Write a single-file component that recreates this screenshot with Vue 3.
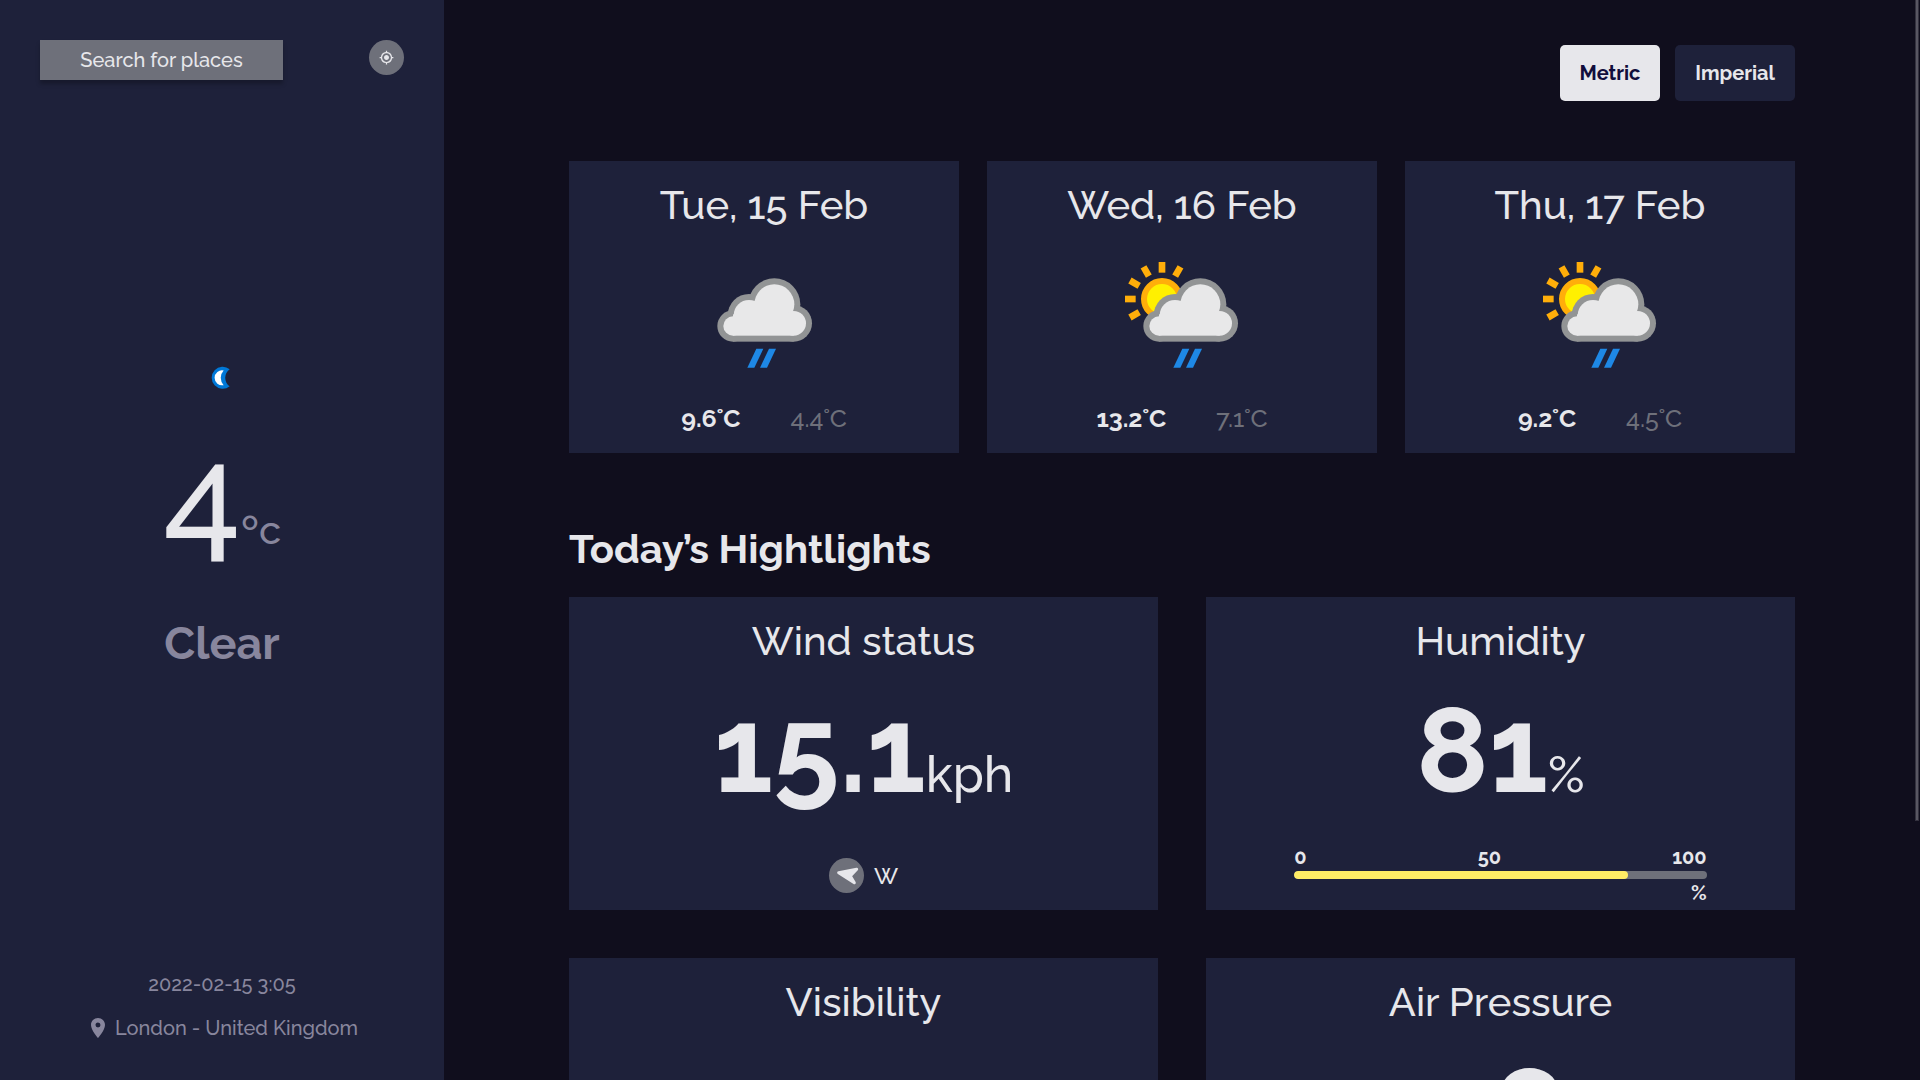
<script setup>
const days = [
  { date: 'Tue, 15 Feb', max: '9.6˚C', min: '4.4˚C', sunny: false },
  { date: 'Wed, 16 Feb', max: '13.2˚C', min: '7.1˚C', sunny: true },
  { date: 'Thu, 17 Feb', max: '9.2˚C', min: '4.5˚C', sunny: true }
]
const humidity = 81
const rays = [-120, -90, -60, -30, 0, 30]
</script>

<template>
  <div class="app">
    <aside class="sidebar">
      <div class="topbar">
        <button class="search">Search for places</button>
        <button class="locate" aria-label="Use my location">
          <svg width="15" height="15" viewBox="0 0 24 24" fill="#e7e7eb">
            <path d="M12 8c-2.21 0-4 1.79-4 4s1.79 4 4 4 4-1.790 4-4-1.790-4-4-4zm8.940 3A8.994 8.994 0 0 0 13 3.060V1h-2v2.060A8.994 8.994 0 0 0 3.060 11H1v2h2.060A8.994 8.994 0 0 0 11 20.940V23h2v-2.060A8.994 8.994 0 0 0 20.940 13H23v-2h-2.060zM12 19c-3.870 0-7-3.130-7-7s3.130-7 7-7 7 3.130 7 7-3.130 7-7 7z" />
          </svg>
        </button>
      </div>

      <svg class="moon" width="20" height="24" viewBox="0 0 60 72">
        <path fill="#0078d7" d="M56 10A33 33 0 1 0 56 61A31 31 0 0 1 56 10Z" />
        <path fill="#ffffff" d="M38 13.500A22.500 22.500 0 1 0 38 57.500A32 32 0 0 1 38 13.500Z" />
      </svg>
      <div class="now"><span class="degrees">4</span><span class="unit">ºc</span></div>
      <div class="condition">Clear</div>

      <div class="date">2022-02-15 3:05</div>
      <div class="place">
        <svg width="24" height="24" viewBox="0 0 24 24" fill="#88869d">
          <path d="M12 2C8.130 2 5 5.130 5 9c0 5.250 7 13 7 13s7-7.750 7-13c0-3.870-3.130-7-7-7zm0 9.500a2.500 2.500 0 0 1 0-5 2.500 2.500 0 0 1 0 5z" />
        </svg>
        <span>London - United Kingdom</span>
      </div>
    </aside>

    <main class="content">
      <div class="units">
        <button class="unit-btn metric">Metric</button>
        <button class="unit-btn imperial">Imperial</button>
      </div>

      <section class="forecast">
        <article v-for="day in days" :key="day.date" class="card day">
          <h3 class="title">{{ day.date }}</h3>
          <svg class="sky" width="128" height="128" viewBox="0 0 384 384">
            <g v-if="day.sunny">
              <rect
                v-for="angle in rays"
                :key="angle"
                x="122" y="33" width="20" height="32"
                fill="#ffae0a"
                :transform="`rotate(${angle} 132 144)`"
              />
              <circle cx="132" cy="144" r="54" fill="#fff000" stroke="#ffae0a" stroke-width="18" />
            </g>
            <g :transform="day.sunny ? 'translate(24 0)' : ''">
              <g fill="#929495">
                <circle cx="99" cy="225" r="47" />
                <circle cx="147" cy="193" r="64" />
                <circle cx="223" cy="160" r="78" />
                <circle cx="281" cy="217" r="55" />
                <rect x="99" y="210" width="182" height="62" />
              </g>
              <g fill="#e8e8e9">
                <circle cx="99" cy="225" r="29" />
                <circle cx="147" cy="193" r="46" />
                <circle cx="223" cy="160" r="60" />
                <circle cx="281" cy="217" r="37" />
                <rect x="99" y="190" width="182" height="64" />
              </g>
              <g fill="#1e88e5">
                <path d="M169 293h21l-27 57h-21z" />
                <path d="M207 293h21l-27 57h-21z" />
              </g>
            </g>
          </svg>
          <div class="temps">
            <span class="max">{{ day.max }}</span>
            <span class="min">{{ day.min }}</span>
          </div>
        </article>
      </section>

      <h2 class="heading">Today’s Hightlights</h2>

      <section class="highlights">
        <article class="card stat">
          <h3 class="title">Wind status</h3>
          <div class="value">15.1<span class="suffix">kph</span></div>
          <div class="wind">
            <span class="compass">
              <svg width="35" height="35" viewBox="0 0 105 105">
                <path d="M29 44L83 34L64 54L76 74Z" fill="#e7e7eb" stroke="#e7e7eb" stroke-width="9" stroke-linejoin="round" />
              </svg>
            </span>
            <span>W</span>
          </div>
        </article>
        <article class="card stat">
          <h3 class="title">Humidity</h3>
          <div class="value">{{ humidity }}<span class="suffix">%</span></div>
          <div class="meter">
            <div class="scale"><span>0</span><span>50</span><span>100</span></div>
            <div class="track"><div class="fill" :style="{ width: humidity + '%' }"></div></div>
            <div class="percent">%</div>
          </div>
        </article>
        <article class="card stat">
          <h3 class="title">Visibility</h3>
        </article>
        <article class="card stat">
          <h3 class="title">Air Pressure</h3>
          <div class="value pressure">1018.0<span class="suffix">mb</span></div>
        </article>
      </section>
    </main>
    <div class="scrollbar"></div>
  </div>
</template>

<style>
html,
body {
  margin: 0;
  overflow: hidden;
  background: #100e1d;
}
</style>

<style scoped>
.app {
  position: relative;
  display: flex;
  height: 1080px;
  overflow: hidden;
  background: #100e1d;
  color: #e7e7eb;
  font-family: Raleway, Lato, "Open Sans", sans-serif;
  font-size: 20px;
  font-weight: 500;
  line-height: 24px;
}
button {
  border: 0;
  padding: 0;
  font: inherit;
  color: inherit;
}
h2,
h3 {
  margin: 0;
}

.sidebar {
  box-sizing: border-box;
  flex: none;
  width: 444px;
  height: 1080px;
  padding: 40px;
  display: flex;
  flex-direction: column;
  align-items: center;
  background: #1e213a;
  color: #88869d;
}
.topbar {
  width: 100%;
  display: flex;
  justify-content: space-between;
  align-items: flex-start;
}
.search {
  width: 243px;
  height: 40px;
  background: #6e707a;
  color: #e7e7eb;
  box-shadow: 0 4px 4px rgba(0, 0, 0, 0.25);
}
.locate {
  width: 35px;
  height: 35px;
  border-radius: 50%;
  display: flex;
  align-items: center;
  justify-content: center;
  background: #6e707a;
}
.moon {
  display: block;
  margin-top: 286px;
  margin-right: 2px;
}
.now {
  margin-top: 20px;
  height: 169px;
  font-size: 140px;
  line-height: 169px;
  white-space: nowrap;
}
.degrees {
  color: #e7e7eb;
}
.unit {
  font-size: 40px;
  line-height: 1;
}
.condition {
  margin-top: 39px;
  font-size: 45px;
  font-weight: 700;
  line-height: 52px;
}
.date {
  margin-top: auto;
}
.place {
  margin-top: 20px;
  display: flex;
  gap: 5px;
  white-space: nowrap;
}

.content {
  flex: none;
  width: 1226px;
  margin-left: 125px;
}
.units {
  margin-top: 45px;
  display: flex;
  justify-content: flex-end;
  gap: 15px;
}
.unit-btn {
  height: 56px;
  border-radius: 5px;
  font-weight: 700;
}
.metric {
  width: 100px;
  background: #e7e7eb;
  color: #110e3c;
}
.imperial {
  width: 120px;
  background: #1e213a;
}
.forecast {
  margin-top: 60px;
  display: grid;
  grid-template-columns: repeat(3, 390px);
  gap: 28px;
}
.card {
  box-sizing: border-box;
  padding-top: 20px;
  display: flex;
  flex-direction: column;
  align-items: center;
  background: #1e213a;
}
.day {
  height: 292px;
}
.title {
  font-size: 40px;
  font-weight: 500;
  line-height: 47px;
}
.sky {
  display: block;
  margin-top: 23px;
}
.temps {
  margin-top: 25px;
  display: flex;
  gap: 50px;
  font-size: 25px;
  line-height: 29px;
}
.max {
  font-weight: 700;
}
.min {
  color: #6e707a;
}
.heading {
  margin-top: 72px;
  font-size: 40px;
  font-weight: 700;
  line-height: 47px;
}
.highlights {
  margin-top: 25px;
  display: grid;
  grid-template-columns: repeat(2, 589px);
  gap: 48px;
}
.stat {
  height: 313px;
}
.value {
  margin-top: 15px;
  font-size: 120px;
  font-weight: 700;
  line-height: 141px;
  white-space: nowrap;
}
.suffix {
  font-size: 50px;
  font-weight: 500;
  line-height: 1;
}
.pressure {
  padding-left: 44px;
}
.wind {
  margin-top: 38px;
  display: flex;
  align-items: center;
  gap: 10px;
  font-size: 23px;
  line-height: 28px;
}
.compass {
  width: 35px;
  height: 35px;
  border-radius: 50%;
  background: #6e707a;
}
.compass svg {
  display: block;
}
.meter {
  width: 70%;
  margin-top: 25px;
}
.scale {
  display: flex;
  justify-content: space-between;
  font-weight: 700;
}
.track {
  margin-top: 2px;
  height: 8px;
  border-radius: 8px;
  overflow: hidden;
  background: #6e707a;
}
.fill {
  height: 8px;
  border-radius: 8px;
  background: #ffec65;
}
.percent {
  margin-top: 2px;
  font-weight: 700;
  text-align: right;
}
.scrollbar {
  position: absolute;
  top: 0;
  right: 1px;
  box-sizing: border-box;
  width: 4px;
  height: 821px;
  border: 1px solid #34323f;
  border-width: 0 1px 1px;
  background: #595763;
}
</style>
